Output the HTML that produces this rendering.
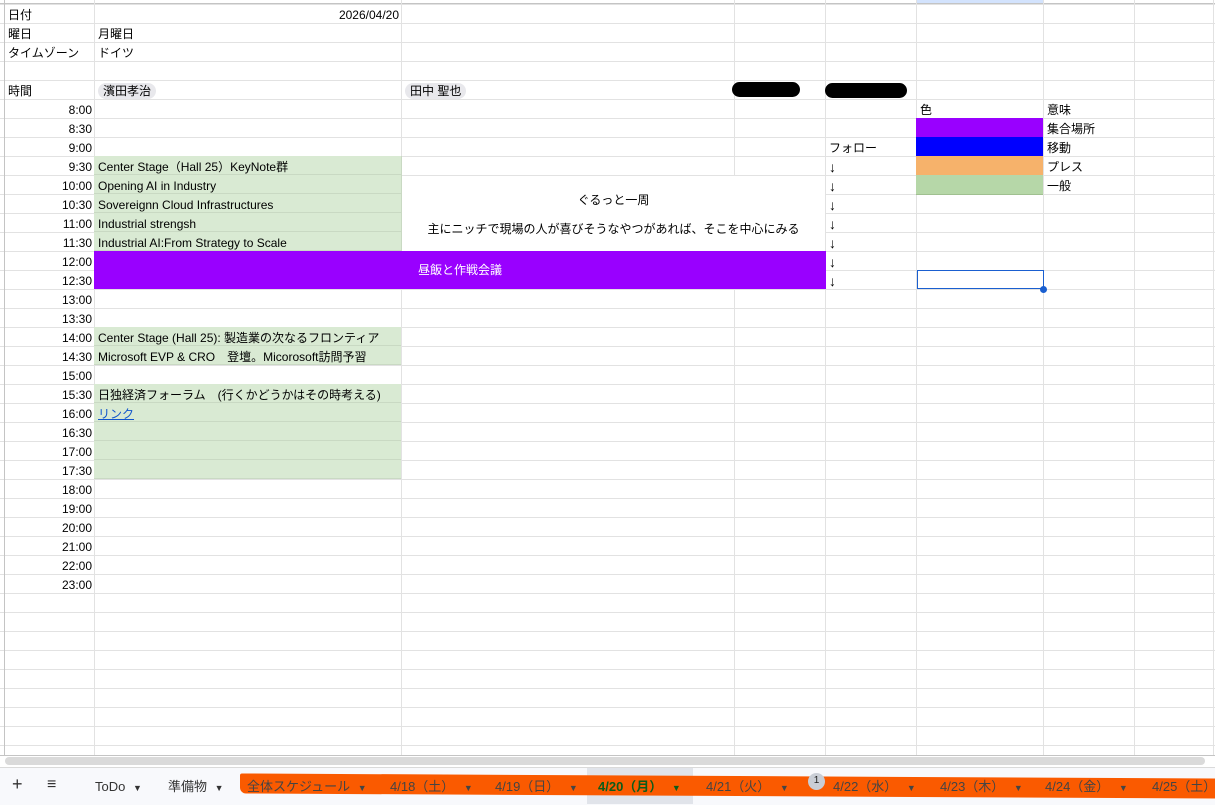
<!DOCTYPE html>
<html><head><meta charset="utf-8"><style>
body{margin:0;width:1215px;height:804px;overflow:hidden;background:#fff;font-family:"Liberation Sans","Noto Sans CJK JP",sans-serif;font-size:12px;color:#000;position:relative}
.a{position:absolute}
.grid{position:absolute;left:0;top:4px;width:1215px;height:752px;background-image:repeating-linear-gradient(to bottom,#e2e2e2 0,#e2e2e2 1px,transparent 1px,transparent 19px)}
.v{position:absolute;top:0;width:1px;height:756px;background:#e2e2e2}
.t{position:absolute;height:19px;line-height:19px;padding-top:2px;white-space:nowrap}
.r{text-align:right}
.chip{position:absolute;background:#e8e8ec;border-radius:8px;height:15px;line-height:15px;padding:1px 5px 0}
</style></head><body>
<div class="a" style="left:916px;top:0;width:127px;height:4px;background:#d3e3fd"></div>
<div class="a" style="left:0;top:3px;width:1215px;height:1px;background:#c4c4c4"></div>
<div class="grid"></div>
<div class="v" style="left:4px;background:#c4c4c4"></div>
<div class="v" style="left:94px"></div><div class="v" style="left:401px"></div><div class="v" style="left:734px"></div><div class="v" style="left:825px"></div><div class="v" style="left:916px"></div><div class="v" style="left:1043px"></div><div class="v" style="left:1134px"></div><div class="v" style="left:1213px"></div>

<div class="a" style="left:94px;top:156px;width:307px;height:95px;background:#d9ead3;background-image:repeating-linear-gradient(to bottom,transparent 0,transparent 18px,#c9d9c3 18px,#c9d9c3 19px)"></div>
<div class="a" style="left:94px;top:327px;width:307px;height:38px;background:#d9ead3;background-image:repeating-linear-gradient(to bottom,transparent 0,transparent 18px,#c9d9c3 18px,#c9d9c3 19px)"></div>
<div class="a" style="left:94px;top:384px;width:307px;height:95px;background:#d9ead3;background-image:repeating-linear-gradient(to bottom,transparent 0,transparent 18px,#c9d9c3 18px,#c9d9c3 19px)"></div>
<div class="a" style="left:401px;top:156px;width:1px;height:95px;background:#c9d9c3"></div>
<div class="a" style="left:402px;top:176px;width:423px;height:75px;background:#fff"></div>
<div class="t" style="left:402px;top:189px;width:423px;text-align:center">ぐるっと一周</div>
<div class="t" style="left:402px;top:218px;width:423px;text-align:center">主にニッチで現場の人が喜びそうなやつがあれば、そこを中心にみる</div>
<div class="a" style="left:94px;top:251px;width:732px;height:38px;background:#9900ff"></div>
<div class="t" style="left:94px;top:259px;width:732px;text-align:center;color:#fff">昼飯と作戦会議</div>
<div class="a" style="left:916px;top:118px;width:127px;height:19px;background:#9900ff"></div>
<div class="a" style="left:916px;top:137px;width:127px;height:19px;background:#0000ff"></div>
<div class="a" style="left:916px;top:156px;width:127px;height:19px;background:#f6b26b"></div>
<div class="a" style="left:916px;top:175px;width:127px;height:19px;background:#b6d7a8;border-bottom:1px solid #a0c090"></div>
<div class="t" style="left:920px;top:99px">色</div>
<div class="t" style="left:1047px;top:99px">意味</div>
<div class="t" style="left:1047px;top:118px">集合場所</div>
<div class="t" style="left:1047px;top:137px">移動</div>
<div class="t" style="left:1047px;top:156px">プレス</div>
<div class="t" style="left:1047px;top:175px">一般</div>
<div class="a" style="left:917px;top:270px;width:127px;height:19px;border:1px solid #1a5fd0;box-sizing:border-box"></div>
<div class="a" style="left:1040px;top:286px;width:7px;height:7px;border-radius:50%;background:#1a5fd0"></div>
<div class="t" style="left:829px;top:137px">フォロー</div>
<div class="t" style="left:829px;top:156px;font-size:14px">↓</div><div class="t" style="left:829px;top:175px;font-size:14px">↓</div><div class="t" style="left:829px;top:194px;font-size:14px">↓</div><div class="t" style="left:829px;top:213px;font-size:14px">↓</div><div class="t" style="left:829px;top:232px;font-size:14px">↓</div><div class="t" style="left:829px;top:251px;font-size:14px">↓</div><div class="t" style="left:829px;top:270px;font-size:14px">↓</div>
<div class="a" style="left:732px;top:82px;width:68px;height:15px;border-radius:8px;background:#000"></div>
<div class="a" style="left:825px;top:83px;width:82px;height:15px;border-radius:8px;background:#000"></div>
<div class="t" style="left:8px;top:4px">日付</div>
<div class="t r" style="left:94px;top:4px;width:305px">2026/04/20</div>
<div class="t" style="left:8px;top:23px">曜日</div>
<div class="t" style="left:98px;top:23px">月曜日</div>
<div class="t" style="left:8px;top:42px">タイムゾーン</div>
<div class="t" style="left:98px;top:42px">ドイツ</div>
<div class="t" style="left:8px;top:80px">時間</div>
<div class="chip" style="left:98px;top:83px">濱田孝治</div>
<div class="chip" style="left:405px;top:83px">田中 聖也</div>
<div class="t r" style="left:4px;top:99px;width:88px">8:00</div>
<div class="t r" style="left:4px;top:118px;width:88px">8:30</div>
<div class="t r" style="left:4px;top:137px;width:88px">9:00</div>
<div class="t r" style="left:4px;top:156px;width:88px">9:30</div>
<div class="t r" style="left:4px;top:175px;width:88px">10:00</div>
<div class="t r" style="left:4px;top:194px;width:88px">10:30</div>
<div class="t r" style="left:4px;top:213px;width:88px">11:00</div>
<div class="t r" style="left:4px;top:232px;width:88px">11:30</div>
<div class="t r" style="left:4px;top:251px;width:88px">12:00</div>
<div class="t r" style="left:4px;top:270px;width:88px">12:30</div>
<div class="t r" style="left:4px;top:289px;width:88px">13:00</div>
<div class="t r" style="left:4px;top:308px;width:88px">13:30</div>
<div class="t r" style="left:4px;top:327px;width:88px">14:00</div>
<div class="t r" style="left:4px;top:346px;width:88px">14:30</div>
<div class="t r" style="left:4px;top:365px;width:88px">15:00</div>
<div class="t r" style="left:4px;top:384px;width:88px">15:30</div>
<div class="t r" style="left:4px;top:403px;width:88px">16:00</div>
<div class="t r" style="left:4px;top:422px;width:88px">16:30</div>
<div class="t r" style="left:4px;top:441px;width:88px">17:00</div>
<div class="t r" style="left:4px;top:460px;width:88px">17:30</div>
<div class="t r" style="left:4px;top:479px;width:88px">18:00</div>
<div class="t r" style="left:4px;top:498px;width:88px">19:00</div>
<div class="t r" style="left:4px;top:517px;width:88px">20:00</div>
<div class="t r" style="left:4px;top:536px;width:88px">21:00</div>
<div class="t r" style="left:4px;top:555px;width:88px">22:00</div>
<div class="t r" style="left:4px;top:574px;width:88px">23:00</div>
<div class="t" style="left:98px;top:156px">Center Stage（Hall 25）KeyNote群</div>
<div class="t" style="left:98px;top:175px">Opening AI in Industry</div>
<div class="t" style="left:98px;top:194px">Sovereignn Cloud Infrastructures</div>
<div class="t" style="left:98px;top:213px">Industrial strengsh</div>
<div class="t" style="left:98px;top:232px">Industrial AI:From Strategy to Scale</div>
<div class="t" style="left:98px;top:327px">Center Stage (Hall 25): 製造業の次なるフロンティア</div>
<div class="t" style="left:98px;top:346px">Microsoft EVP &amp; CRO　登壇。Micorosoft訪問予習</div>
<div class="t" style="left:98px;top:384px">日独経済フォーラム　(行くかどうかはその時考える)</div>
<div class="t" style="left:98px;top:403px;color:#1155cc;text-decoration:underline">リンク</div>
<div class="a" style="left:0;top:755px;width:1215px;height:12px;background:#fff;border-top:1px solid #c4c4c4"></div>
<div class="a" style="left:5px;top:757px;width:1200px;height:8px;border-radius:4px;background:#dadada"></div>
<div class="a" style="left:0;top:767px;width:1215px;height:37px;background:#f8f9fc;border-top:1px solid #dadada"></div>
<div class="a" style="left:587px;top:768px;width:106px;height:36px;background:#e1e4ea"></div>
<div class="a" style="left:240px;top:776px;width:975px;height:20px;background:#fa5a00;transform:skewY(0.3deg);border-radius:2px 0 0 6px"></div>
<div class="t" style="left:12px;top:773px;font-size:18px;color:#333">+</div>
<div class="t" style="left:47px;top:773px;font-size:16px;color:#333">≡</div>
<div class="t" style="left:95px;top:775px;color:#333;font-size:13px">ToDo <span style="font-size:9px;margin-left:4px">▼</span></div>
<div class="t" style="left:168px;top:775px;color:#333;font-size:13px">準備物 <span style="font-size:9px;margin-left:4px">▼</span></div>
<div class="t" style="left:247px;top:775px;color:#444;font-size:13px">全体スケジュール <span style="font-size:9px;margin-left:4px">▼</span></div>
<div class="t" style="left:390px;top:775px;color:#444;font-size:13px">4/18（土） <span style="font-size:9px;margin-left:6px">▼</span></div>
<div class="t" style="left:495px;top:775px;color:#444;font-size:13px">4/19（日） <span style="font-size:9px;margin-left:6px">▼</span></div>
<div class="t" style="left:598px;top:775px;color:#0b5c1a;font-size:13px;font-weight:bold">4/20（月） <span style="font-size:9px;margin-left:6px">▼</span></div>
<div class="t" style="left:706px;top:775px;color:#444;font-size:13px">4/21（火） <span style="font-size:9px;margin-left:6px">▼</span></div>
<div class="a" style="left:808px;top:773px;width:17px;height:17px;border-radius:50%;background:#c9ced6;font-size:10px;text-align:center;line-height:15px;color:#222">1</div>
<div class="t" style="left:833px;top:775px;color:#444;font-size:13px">4/22（水） <span style="font-size:9px;margin-left:6px">▼</span></div>
<div class="t" style="left:940px;top:775px;color:#444;font-size:13px">4/23（木） <span style="font-size:9px;margin-left:6px">▼</span></div>
<div class="t" style="left:1045px;top:775px;color:#444;font-size:13px">4/24（金） <span style="font-size:9px;margin-left:6px">▼</span></div>
<div class="t" style="left:1152px;top:775px;color:#444;font-size:13px">4/25（土）</div>
</body></html>
